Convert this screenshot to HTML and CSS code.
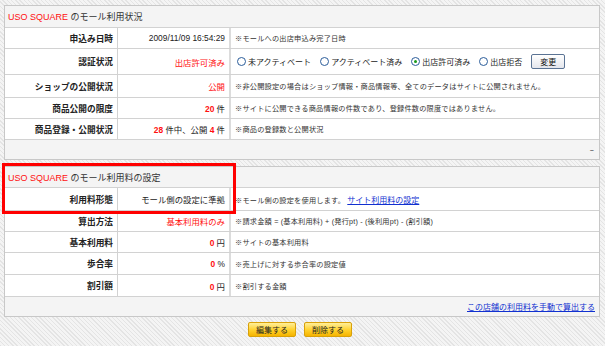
FILE: index.html
```html
<!DOCTYPE html>
<html lang="ja">
<head>
<meta charset="utf-8">
<title>USO SQUARE</title>
<link rel="stylesheet" href="styles.css">
</head>
<body>
<div class="page">
  <section class="panel">
    <div class="ph"><span><span class="red">USO SQUARE</span> のモール利用状況</span></div>
    <div class="row r20">
      <div class="lab">申込み日時</div>
      <div class="val">2009/11/09 16:54:29</div>
      <div class="desc">※モールへの出店申込み完了日時</div>
    </div>
    <div class="row r25">
      <div class="lab">認証状況</div>
      <div class="val red">出店許可済み</div>
      <div class="desc radios">
        <label class="radio"><span class="dot"></span>未アクティベート</label>
        <label class="radio"><span class="dot"></span>アクティベート済み</label>
        <label class="radio"><span class="dot on"></span>出店許可済み</label>
        <label class="radio"><span class="dot"></span>出店拒否</label>
        <button class="sbtn">変更</button>
      </div>
    </div>
    <div class="row r22">
      <div class="lab">ショップの公開状況</div>
      <div class="val red">公開</div>
      <div class="desc">※非公開設定の場合はショップ情報・商品情報等、全てのデータはサイトに公開されません。</div>
    </div>
    <div class="row r20">
      <div class="lab">商品公開の限度</div>
      <div class="val"><span><b class="red">20</b> 件</span></div>
      <div class="desc">※サイトに公開できる商品情報の件数であり、登録件数の限度ではありません。</div>
    </div>
    <div class="row r20">
      <div class="lab">商品登録・公開状況</div>
      <div class="val"><span><b class="red">28</b> 件中、公開 <b class="red">4</b> 件</span></div>
      <div class="desc">※商品の登録数と公開状況</div>
    </div>
    <div class="pf"><span class="dash">--</span></div>
  </section>

  <section class="panel second">
    <div class="ph h20"><span><span class="red">USO SQUARE</span> のモール利用料の設定</span></div>
    <div class="row r22">
      <div class="lab">利用料形態</div>
      <div class="val">モール側の設定に準拠</div>
      <div class="desc"><span>※モール側の設定を使用します。 <a class="link" href="#">サイト利用料の設定</a></span></div>
    </div>
    <div class="row r20">
      <div class="lab">算出方法</div>
      <div class="val red">基本利用料のみ</div>
      <div class="desc">※請求金額 = (基本利用料) + (発行pt) - (後利用pt) - (割引額)</div>
    </div>
    <div class="row r20">
      <div class="lab">基本利用料</div>
      <div class="val"><span><b class="red">0</b> 円</span></div>
      <div class="desc">※サイトの基本利用料</div>
    </div>
    <div class="row r21">
      <div class="lab">歩合率</div>
      <div class="val"><span><b class="red">0</b> %</span></div>
      <div class="desc">※売上げに対する歩合率の設定値</div>
    </div>
    <div class="row r21">
      <div class="lab">割引額</div>
      <div class="val"><span><b class="red">0</b> 円</span></div>
      <div class="desc">※割引する金額</div>
    </div>
    <div class="pf"><a class="link" href="#">この店舗の利用料を手動で算出する</a></div>
  </section>

  <div class="actions">
    <button class="gbtn">編集する</button>
    <button class="gbtn">削除する</button>
  </div>

  <div class="highlight"></div>
</div>
</body>
</html>
```

FILE: styles.css
```css
html, body {
  margin: 0;
  padding: 0;
}
body {
  width: 605px;
  height: 346px;
  overflow: hidden;
  font-family: "Liberation Sans", "Noto Sans CJK JP", sans-serif;
  color: #222;
  background-color: #f2f2f2;
  background-image: repeating-linear-gradient(45deg, #e4e4e4 0 1px, #f4f4f4 1px 3px);
}
.page {
  position: relative;
  padding: 5px 5px 0 4px;
}
.panel {
  width: 596px;
  box-sizing: border-box;
  border: 1px solid #c8c8c8;
  background: #f4f4f4;
}
.panel.second {
  margin-top: 6px;
}
.ph {
  height: 21px;
  display: flex;
  align-items: center;
  padding-left: 3px;
  font-size: 9px;
  color: #333;
  background: #f4f4f4;
}
.ph.h20 {
  height: 20px;
}
.red {
  color: #ff1010;
}
b.red {
  font-weight: bold;
}
.row {
  display: grid;
  grid-template-columns: 112px 112px 1fr;
  border-top: 1px solid #d2d2d2;
  background: #fff;
}
.r20 { height: 20px; }
.r21 { height: 21px; }
.r22 { height: 22px; }
.r25 { height: 25px; }
.lab, .val, .desc {
  display: flex;
  align-items: center;
  min-width: 0;
  white-space: nowrap;
}
.lab {
  justify-content: flex-end;
  padding-right: 4px;
  font-size: 8.7px;
  font-weight: bold;
  color: #222;
}
.val {
  justify-content: flex-end;
  padding-right: 4px;
  border-left: 1px solid #d2d2d2;
  font-size: 8.4px;
}
.desc {
  padding-left: 4px;
  border-left: 2px solid #dcdcdc;
  font-size: 7.2px;
  letter-spacing: 0.2px;
  color: #333;
}
.radios {
  font-size: 8px;
  letter-spacing: 0;
  padding-left: 6px;
}
.radio {
  display: inline-flex;
  align-items: center;
  margin-right: 9px;
  color: #222;
}
.dot {
  width: 7px;
  height: 7px;
  border: 1px solid #2b5d9a;
  border-radius: 50%;
  background: #fff;
  margin-right: 2px;
  position: relative;
}
.dot.on::after {
  content: "";
  position: absolute;
  left: 2px;
  top: 2px;
  width: 3px;
  height: 3px;
  border-radius: 50%;
  background: #1a9a1a;
}
.sbtn {
  margin-left: 0;
  width: 34px;
  height: 15px;
  padding: 0;
  font-family: inherit;
  font-size: 8px;
  color: #111;
  border: 1px solid #5a7394;
  border-radius: 2px;
  background: linear-gradient(#ffffff, #e4e6ec);
}
.link {
  color: #1030d0;
  text-decoration: underline;
  font-size: 8px;
  letter-spacing: 0;
}
.pf {
  height: 19px;
  border-top: 1px solid #d2d2d2;
  display: flex;
  align-items: center;
  justify-content: flex-end;
  padding-right: 4px;
  background: #f4f4f4;
}
.dash {
  font-size: 8px;
  color: #444;
  letter-spacing: -1px;
  padding-right: 2px;
}
.actions {
  display: flex;
  justify-content: center;
  gap: 8px;
  margin-top: 5px;
  padding-right: 4px;
}
.gbtn {
  width: 48px;
  height: 15px;
  padding: 0;
  font-family: inherit;
  font-size: 8px;
  color: #222;
  border: 1px solid #d9a10a;
  border-radius: 2px;
  background: linear-gradient(#ffef9a, #ffd02a 55%, #f5b400);
}
.highlight {
  position: absolute;
  left: 2px;
  top: 163px;
  width: 234px;
  height: 51px;
  box-sizing: border-box;
  border: 3px solid #ff0000;
  pointer-events: none;
}
```
